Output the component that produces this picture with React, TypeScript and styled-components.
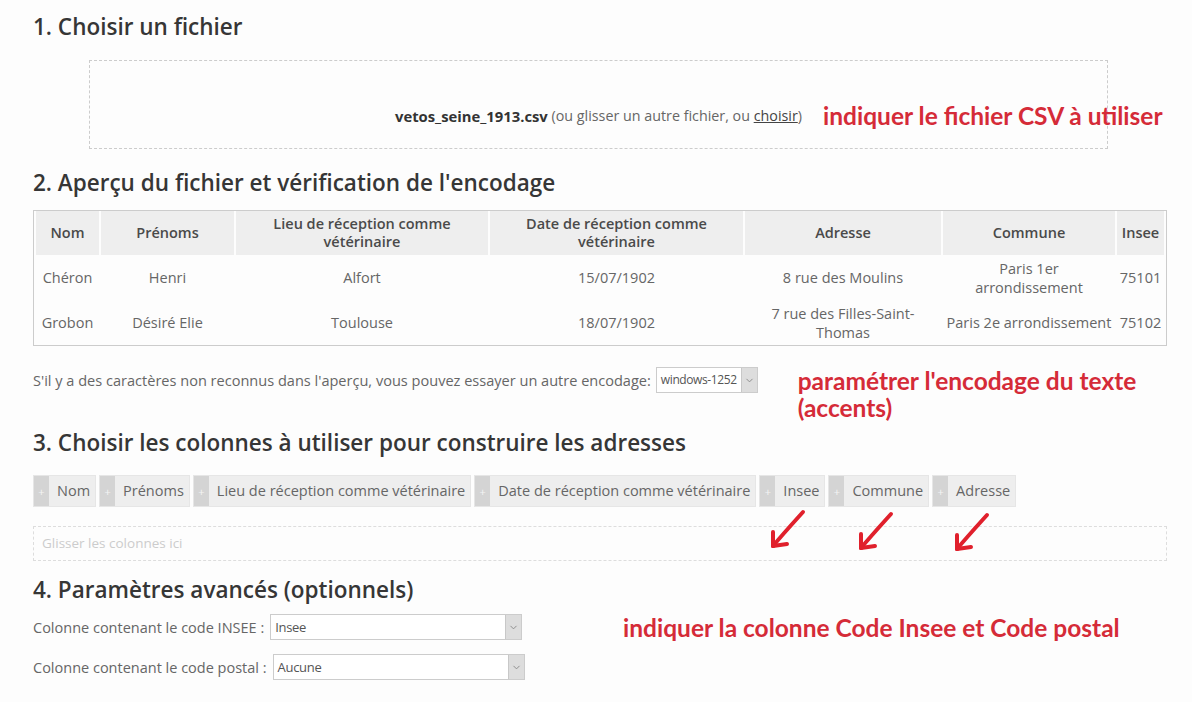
import styled, { createGlobalStyle } from "styled-components";
import { ChevronDown } from "lucide-react";

const GlobalStyle = createGlobalStyle`
  html, body {
    margin: 0;
    padding: 0;
    background: #fdfdfd;
  }
  body {
    font-family: "Open Sans", "DejaVu Sans", sans-serif;
    font-size: 14.5px;
    color: #666;
  }
`;

const columns = [
  { label: "Nom", width: 63 },
  { label: "Prénoms", width: 133 },
  { label: "Lieu de réception comme vétérinaire", width: 252 },
  { label: "Date de réception comme vétérinaire", width: 253 },
  { label: "Adresse", width: 196 },
  { label: "Commune", width: 172 },
  { label: "Insee", width: 47 },
];

const rows = [
  ["Chéron", "Henri", "Alfort", "15/07/1902", "8 rue des Moulins", "Paris 1er arrondissement", "75101"],
  ["Grobon", "Désiré Elie", "Toulouse", "18/07/1902", "7 rue des Filles-Saint-Thomas", "Paris 2e arrondissement", "75102"],
];

const chips = [
  "Nom",
  "Prénoms",
  "Lieu de réception comme vétérinaire",
  "Date de réception comme vétérinaire",
  "Insee",
  "Commune",
  "Adresse",
];

// hand drawn arrows pointing at the drop zone
const arrows = [
  { left: 767, top: 33 },
  { left: 855, top: 35 },
  { left: 951, top: 36 },
];

export default function App() {
  return (
    <>
      <GlobalStyle />
      <Page>
        <Section>
          <Heading>1. Choisir un fichier</Heading>
          <FileDrop>
            <FileName>vetos_seine_1913.csv</FileName>
            <FileHint>
              {" "}(ou glisser un autre fichier, ou <u>choisir</u>)
            </FileHint>
            <FileNote>indiquer le fichier CSV à utiliser</FileNote>
          </FileDrop>
        </Section>

        <Section $top={20}>
          <Heading>2. Aperçu du fichier et vérification de l'encodage</Heading>
          <Preview>
            <colgroup>
              {columns.map((c) => (
                <col key={c.label} style={{ width: c.width }} />
              ))}
            </colgroup>
            <thead>
              <tr>
                {columns.map((c) => (
                  <HeadCell key={c.label}>
                    <HeadLabel>{c.label}</HeadLabel>
                  </HeadCell>
                ))}
              </tr>
            </thead>
            <tbody>
              {rows.map((r, i) => (
                <tr key={i}>
                  {r.map((v, j) => (
                    <Cell key={j}>{v}</Cell>
                  ))}
                </tr>
              ))}
            </tbody>
          </Preview>
          <EncodingRow>
            <EncodingText>
              S'il y a des caractères non reconnus dans l'aperçu, vous pouvez
              essayer un autre encodage:
            </EncodingText>
            <Select>
              <SelectValue $small>windows-1252</SelectValue>
              <SelectArrow>
                <ChevronDown size={11} strokeWidth={2} />
              </SelectArrow>
            </Select>
            <Note $width={360}>paramétrer l'encodage du texte (accents)</Note>
          </EncodingRow>
        </Section>

        <Section $top={8}>
          <Heading>3. Choisir les colonnes à utiliser pour construire les adresses</Heading>
          <ColumnsArea>
            <ChipList>
              {chips.map((c) => (
                <Chip key={c}>
                  <ChipHandle>+</ChipHandle>
                  <ChipLabel>{c}</ChipLabel>
                </Chip>
              ))}
            </ChipList>
            <ColumnDrop>Glisser les colonnes ici</ColumnDrop>
            {arrows.map((a, i) => (
              <Arrow key={i} style={{ left: a.left - 33, top: a.top }} width="40" height="44" viewBox="0 0 40 44">
                <path d="M36 4 C27 14 16 26 6 38" />
                <path d="M6 38 L6 24" />
                <path d="M6 38 L20 36" />
              </Arrow>
            ))}
          </ColumnsArea>
        </Section>

        <Section $top={15}>
          <Heading>4. Paramètres avancés (optionnels)</Heading>
          <AdvancedRow>
            <FieldList>
              <Field>
                <FieldLabel>Colonne contenant le code INSEE :</FieldLabel>
                <Select $width={252}>
                  <SelectValue>Insee</SelectValue>
                  <SelectArrow>
                    <ChevronDown size={11} strokeWidth={2} />
                  </SelectArrow>
                </Select>
              </Field>
              <Field>
                <FieldLabel>Colonne contenant le code postal :</FieldLabel>
                <Select $width={252}>
                  <SelectValue>Aucune</SelectValue>
                  <SelectArrow>
                    <ChevronDown size={11} strokeWidth={2} />
                  </SelectArrow>
                </Select>
              </Field>
            </FieldList>
            <Note>indiquer la colonne Code Insee et Code postal</Note>
          </AdvancedRow>
        </Section>
      </Page>
    </>
  );
}

const Page = styled.div`
  width: 1134px;
  padding: 13px 0 0 33px;
`;

const Section = styled.section<{ $top?: number }>`
  margin-top: ${({ $top }) => $top ?? 0}px;
`;

const Heading = styled.h2`
  margin: 0;
  font-size: 22.5px;
  line-height: 28px;
  font-weight: 600;
  color: #363636;
`;

const FileDrop = styled.div`
  position: relative;
  box-sizing: border-box;
  margin: 19px 0 0 56px;
  width: 1019px;
  height: 89px;
  padding-top: 22px;
  border: 1px dashed #ccc;
  display: flex;
  align-items: center;
  justify-content: center;
  white-space: pre;
`;

const FileName = styled.b`
  font-size: 14.8px;
  color: #333;
`;

const FileHint = styled.span`
  font-size: 14.3px;
  color: #666;

  u {
    color: #444;
  }
`;

const Note = styled.div<{ $width?: number }>`
  font-family: Lato, "Liberation Sans", sans-serif;
  font-weight: 700;
  font-size: 24.5px;
  line-height: 27px;
  color: #d52b38;
  ${({ $width }) => ($width ? `width: ${$width}px;` : "")}
`;

const FileNote = styled(Note)`
  position: absolute;
  left: 733px;
  top: 41px;
  white-space: nowrap;
`;

const Preview = styled.table`
  margin-top: 13px;
  width: 1134px;
  table-layout: fixed;
  border: 1px solid #ccc;
  border-collapse: separate;
  border-spacing: 2px 0;
`;

const HeadCell = styled.th`
  height: 44px;
  padding: 0 2px;
  background: #eee;
  color: #4a4a4a;
  font-weight: 600;
  font-size: 14.5px;
  line-height: 18px;
  text-align: center;
`;

const HeadLabel = styled.span`
  display: inline-block;
  max-width: 220px;
`;

const Cell = styled.td`
  height: 45px;
  padding: 0 2px;
  font-size: 14.5px;
  line-height: 19px;
  color: #666;
  text-align: center;
`;

const EncodingRow = styled.div`
  display: flex;
  align-items: flex-start;
  margin-top: 21px;
`;

const EncodingText = styled.span`
  font-size: 14.55px;
  line-height: 26px;
  margin-right: 5px;
  white-space: nowrap;
`;

const Select = styled.div<{ $width?: number }>`
  display: flex;
  flex: none;
  box-sizing: border-box;
  ${({ $width }) => ($width ? `width: ${$width}px;` : "")}
  height: 26px;
  border: 1px solid #ccc;
  background: #fff;
  margin-right: 40px;
`;

const SelectValue = styled.span<{ $small?: boolean }>`
  flex: 1;
  padding: 0 4px;
  font-size: ${({ $small }) => ($small ? 12 : 13)}px;
  letter-spacing: ${({ $small }) => ($small ? -0.4 : -0.3)}px;
  line-height: 24px;
  color: #555;
  white-space: nowrap;
`;

const SelectArrow = styled.span`
  width: 15px;
  display: flex;
  align-items: center;
  justify-content: center;
  background: #ddd;
  border-left: 1px solid #c8c8c8;
  color: #888;
`;

const ColumnsArea = styled.div`
  position: relative;
  margin-top: 18px;
`;

const ChipList = styled.div`
  display: flex;
  gap: 3px;
`;

const Chip = styled.div`
  display: flex;
  height: 32px;
  background: #eee;
  border: 1px solid #e6e6e6;
  box-sizing: border-box;
`;

const ChipHandle = styled.span`
  width: 15px;
  display: flex;
  align-items: center;
  justify-content: center;
  background: #d4d4d4;
  color: #f4f4f4;
  font-size: 11px;
`;

const ChipLabel = styled.span`
  padding: 0 5px 0 8px;
  font-size: 14.5px;
  line-height: 30px;
  color: #666;
  white-space: nowrap;
`;

const ColumnDrop = styled.div`
  margin-top: 19px;
  box-sizing: border-box;
  height: 35px;
  padding: 0 8px;
  border: 1px dashed #ddd;
  font-size: 13.5px;
  line-height: 33px;
  color: #ccc;
`;

const Arrow = styled.svg`
  position: absolute;
  fill: none;
  stroke: #e0202c;
  stroke-width: 4;
  stroke-linecap: round;
  stroke-linejoin: round;
`;

const AdvancedRow = styled.div`
  display: flex;
  align-items: flex-start;
  margin-top: 10px;
`;

const FieldList = styled.div`
  display: flex;
  flex-direction: column;
  gap: 14px;
  width: 590px;
`;

const Field = styled.div`
  display: flex;
  align-items: center;
  gap: 6px;
`;

const FieldLabel = styled.span`
  font-size: 14.5px;
  color: #666;
`;
